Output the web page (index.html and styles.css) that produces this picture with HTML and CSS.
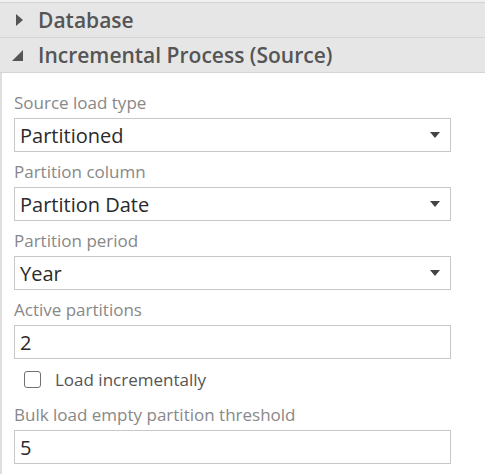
FILE: index.html
```html
<!DOCTYPE html>
<html>
<head>
<meta charset="utf-8">
<link rel="stylesheet" href="styles.css">
</head>
<body>
<div class="panel">
  <div class="section-head">
    <svg class="tri" width="12" height="12" viewBox="0 0 12 12"><path d="M4 0 L11 6 L4 12 Z" fill="#555"/></svg>
    <span>Database</span>
  </div>
  <div class="section-head">
    <svg class="tri" width="12" height="12" viewBox="0 0 12 12"><path d="M11 1 L11 12 L0 12 Z" fill="#555"/></svg>
    <span>Incremental Process (Source)</span>
  </div>
  <div class="body">
    <div class="field">
      <div class="label">Source load type</div>
      <div class="box select"><span>Partitioned</span><span class="caret"></span></div>
    </div>
    <div class="field">
      <div class="label">Partition column</div>
      <div class="box select"><span>Partition Date</span><span class="caret"></span></div>
    </div>
    <div class="field">
      <div class="label">Partition period</div>
      <div class="box select"><span>Year</span><span class="caret"></span></div>
    </div>
    <div class="field">
      <div class="label">Active partitions</div>
      <div class="box"><span>2</span></div>
    </div>
    <div class="check">
      <span class="cb"></span>
      <span>Load incrementally</span>
    </div>
    <div class="field">
      <div class="label">Bulk load empty partition threshold</div>
      <div class="box"><span>5</span></div>
    </div>
  </div>
</div>
</body>
</html>
```
FILE: styles.css
```css
html, body {
  margin: 0;
  padding: 0;
  background: #fff;
}
body {
  font-family: "Open Sans", "Noto Sans", sans-serif;
  width: 485px;
  height: 474px;
  overflow: hidden;
}
.panel {
  height: 474px;
  display: flex;
  flex-direction: column;
  padding-top: 2px;
  box-sizing: border-box;
  background: #f0f0f0;
}
.section-head {
  height: 34px;
  flex: none;
  display: flex;
  align-items: center;
  background: #e6e6e6;
  border-top: 1px solid #d4d4d4;
  color: #555;
  font-size: 21px;
  font-weight: 600;
  padding-left: 12px;
}
.section-head:nth-child(2) {
  border-bottom: 1px solid #d4d4d4;
}
.section-head .tri {
  margin-right: 14px;
}
.body {
  flex: 1;
  background: #fff;
  border-left: 2px solid #dedede;
  padding: 15px 0 0 12px;
}
.field {
  width: 437px;
}
.label {
  color: #888;
  font-size: 17px;
  height: 22px;
  line-height: 22px;
  padding: 4px 0;
}
.box {
  height: 32px;
  border: 1px solid #c8c8c8;
  display: flex;
  align-items: center;
  justify-content: space-between;
  padding: 0 10px 0 5px;
  font-size: 20px;
  color: #2a2a2a;
  margin-bottom: 5px;
}
.caret {
  width: 0;
  height: 0;
  border-left: 5px solid transparent;
  border-right: 5px solid transparent;
  border-top: 6px solid #444;
}
.check {
  display: flex;
  align-items: center;
  height: 30px;
  font-size: 17px;
  color: #555;
  padding-left: 10px;
  margin-bottom: 6px;
}
.cb {
  width: 15px;
  height: 15px;
  border: 1px solid #707070;
  border-radius: 3px;
  margin-right: 14px;
}
```
